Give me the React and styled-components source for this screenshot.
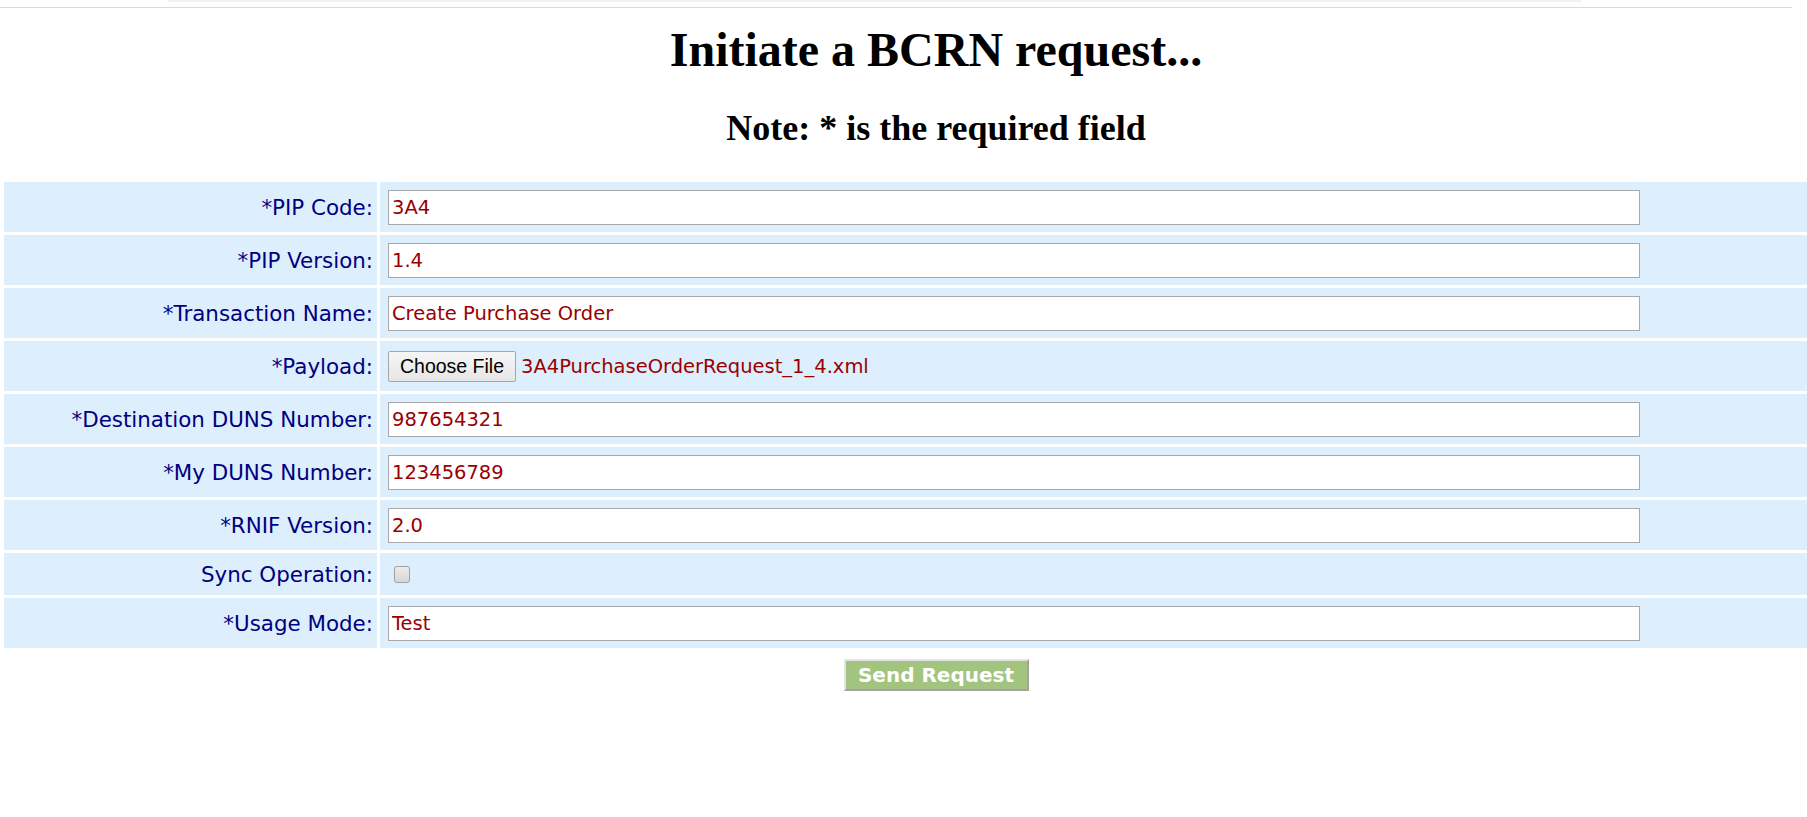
import React from 'react'
import styled, { createGlobalStyle } from 'styled-components'

const GlobalStyle = createGlobalStyle`
html, body {
  margin: 0;
  padding: 0;
  background: #ffffff;
  overflow: hidden;
}
body {
  font-family: "DejaVu Sans", Verdana, sans-serif;
}
`

const TopBar = styled.div`
height: 7px;
width: 1792px;
border-bottom: 1px solid #dadada;
`

const TopStrip = styled.div`
margin-left: 168px;
width: 1413px;
height: 2px;
background: #f1f1f1;
`

const Page = styled.div`
width: 1864px;
margin-left: 4px;
display: flex;
flex-direction: column;
align-items: center;
`

const Title = styled.h1`
font-family: "Liberation Serif", "Times New Roman", serif;
font-weight: bold;
font-size: 48px;
line-height: 55px;
margin: 14px 0 0 0;
color: #000;
`

const Note = styled.h2`
font-family: "Liberation Serif", "Times New Roman", serif;
font-weight: bold;
font-size: 36px;
line-height: 41px;
margin: 31px 0 0 0;
color: #000;
`

const FormGrid = styled.div`
align-self: stretch;
margin-top: 33px;
display: grid;
grid-template-columns: 373px 1fr;
gap: 3px;
`

const Label = styled.div`
display: flex;
align-items: center;
justify-content: flex-end;
height: ${({ $short }) => $short ? '42px' : '50px'};
padding-right: 4px;
background: #ddeefd;
color: #000080;
font-size: 21.4px;
white-space: nowrap;
`

const Field = styled.div`
display: flex;
align-items: center;
height: ${({ $short }) => $short ? '42px' : '50px'};
padding-left: 8px;
background: #ddeefd;
`

const TextInput = styled.input`
box-sizing: border-box;
width: 1252px;
height: 35px;
margin: 0;
padding: 0 3px;
border: 1px solid #a9a9a9;
background: #fff;
color: #990000;
font-family: "DejaVu Sans", Verdana, sans-serif;
font-size: 19.5px;
outline: none;
`

const FileButton = styled.button`
box-sizing: border-box;
width: 128px;
height: 31px;
margin: 0;
padding: 0;
border: 1px solid #a6a6a6;
border-radius: 2px;
background: linear-gradient(#f6f6f6, #e6e6e6);
color: #000;
font-family: "Liberation Sans", Arial, sans-serif;
font-size: 19.5px;
`

const FileName = styled.span`
margin-left: 5px;
color: #990000;
font-size: 19.5px;
`

const CheckBox = styled.input`
appearance: none;
box-sizing: border-box;
width: 16px;
height: 17px;
margin: 0 0 0 6px;
border: 1px solid #a3a3a3;
border-radius: 3px;
background: linear-gradient(#ececec, #d6d6d6);
box-shadow: 0 0 1px rgba(0, 0, 0, 0.15);
`

const SendButton = styled.button`
box-sizing: border-box;
margin-top: 11px;
width: 185px;
height: 32px;
padding: 0;
border: 2px solid;
border-color: #e4e4e4 #a2a2a2 #a2a2a2 #e4e4e4;
background: #a3c47f;
color: #ffffff;
font-family: "DejaVu Sans", Verdana, sans-serif;
font-weight: bold;
font-size: 20px;
`

const fields = [
  { label: '*PIP Code:', value: '3A4' },
  { label: '*PIP Version:', value: '1.4' },
  { label: '*Transaction Name:', value: 'Create Purchase Order' },
  { label: '*Payload:', type: 'file', value: '3A4PurchaseOrderRequest_1_4.xml' },
  { label: '*Destination DUNS Number:', value: '987654321' },
  { label: '*My DUNS Number:', value: '123456789' },
  { label: '*RNIF Version:', value: '2.0' },
  { label: 'Sync Operation:', type: 'checkbox' },
  { label: '*Usage Mode:', value: 'Test' },
]

const FieldControl = ({ field }) => {
  if (field.type === 'file') {
    return (
      <>
        <FileButton type="button">Choose File</FileButton>
        <FileName>{field.value}</FileName>
      </>
    )
  }
  if (field.type === 'checkbox') return <CheckBox type="checkbox" />
  return <TextInput type="text" defaultValue={field.value} />
}

const App = () => (
  <>
    <GlobalStyle />
    <TopBar>
      <TopStrip />
    </TopBar>
    <Page>
      <Title>Initiate a BCRN request...</Title>
      <Note>Note: * is the required field</Note>
      <FormGrid>
        {fields.map(field => (
          <React.Fragment key={field.label}>
            <Label $short={field.type === 'checkbox'}>{field.label}</Label>
            <Field $short={field.type === 'checkbox'}>
              <FieldControl field={field} />
            </Field>
          </React.Fragment>
        ))}
      </FormGrid>
      <SendButton type="button">Send Request</SendButton>
    </Page>
  </>
)

export default App
